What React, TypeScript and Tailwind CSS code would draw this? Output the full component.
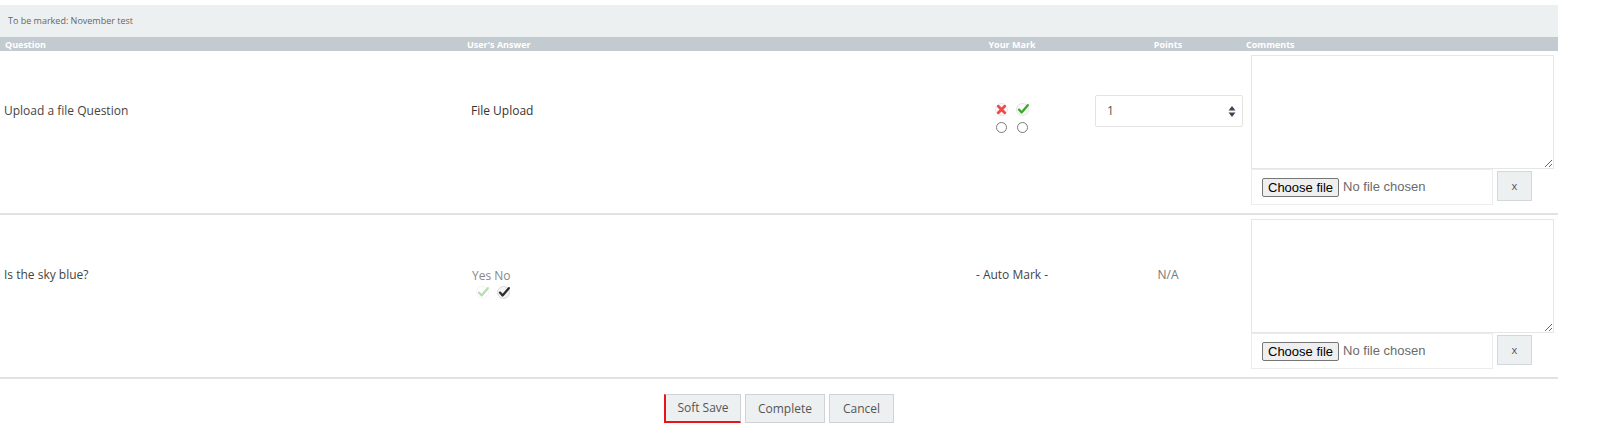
import React from 'react';

const font = { fontFamily: '"Open Sans", "Liberation Sans", Arial, sans-serif' };
const arial = { fontFamily: '"Liberation Sans", Arial, sans-serif' };

function CrossIcon() {
  return (
    <svg width="13" height="13" viewBox="0 0 13 13">
      <circle cx="6.5" cy="6.5" r="6" fill="#fafafa" stroke="#e4e4e4" />
      <path d="M3.3 3.3l6.4 6.4M9.7 3.3l-6.4 6.4" stroke="#f0484b" strokeWidth="2.8" strokeLinecap="round" />
    </svg>
  );
}

function TickIcon({ color = '#3aa82a', ring = '#e2e2e2', fill = '#fafafa' }: { color?: string; ring?: string; fill?: string }) {
  return (
    <svg width="13" height="13" viewBox="0 0 13 13">
      <circle cx="6.5" cy="6.5" r="6" fill={fill} stroke={ring} />
      <path d="M3 6.6l2.6 2.9L11.8 2.2" fill="none" stroke={color} strokeWidth="2.3" strokeLinecap="round" strokeLinejoin="round" />
    </svg>
  );
}

function Radio() {
  return <span className="inline-block w-[11px] h-[11px] rounded-full border border-[#7a7a7a] bg-white" />;
}

function Spinner() {
  return (
    <svg width="8" height="13" viewBox="0 0 8 13">
      <path d="M4 1L7.5 5.5H0.5Z" fill="#3b4552" />
      <path d="M4 12L7.5 7.5H0.5Z" fill="#3b4552" />
    </svg>
  );
}

function CommentsCell() {
  return (
    <div className="pt-[4px] pb-[8px] pl-[5px]">
      <textarea className="block w-[303px] h-[114px] border border-[#e6e6e6] bg-white outline-none resize" />
      <div className="flex items-center gap-[4px]">
        <div className="w-[242px] h-[36px] border border-[#ececec] bg-white flex items-center pl-[10px] text-[13px]" style={arial}>
          <button className="h-[19px] px-[5px] border border-[#767676] rounded-[2px] bg-[#efefef] text-black leading-none">Choose file</button>
          <span className="ml-[4px] text-[#6b6b6b]">No file chosen</span>
        </div>
        <button className="w-[35px] h-[30px] -mt-[2px] bg-[#edf0f1] border border-[#d3d7da] text-[11px] text-[#555]">x</button>
      </div>
    </div>
  );
}

export default function App() {
  const cols = 'grid grid-cols-[462px_472px_156px_156px_312px]';
  return (
    <div className="bg-white w-[1600px] h-[436px] text-[#444]" style={font}>
      <div className="w-[1558px] pt-[5px]">
        <div className="h-[32px] bg-[#edf0f1] flex items-center pl-[8px] text-[9px] text-[#666]">To be marked: November test</div>
        <div className={`${cols} h-[14px] bg-[#c3cbd0] text-white text-[9px] font-bold items-center leading-none`}>
          <div className="pl-[5px]">Question</div>
          <div className="pl-[5px]">User's Answer</div>
          <div className="text-center">Your Mark</div>
          <div className="text-center">Points</div>
          <div>Comments</div>
        </div>

        {/* row 1 */}
        <div className={`${cols} border-b-2 border-[#e2e2e2] text-[12px]`}>
          <div className="flex items-center pl-[4px] pb-[42px]">Upload a file Question</div>
          <div className="flex items-center pl-[9px] pb-[42px] text-[#333]">File Upload</div>
          <div className="flex items-center justify-center pb-[42px]">
            <div className="grid grid-cols-2 gap-x-[8px] gap-y-[6px] mt-[14px] justify-items-center">
              <CrossIcon />
              <TickIcon />
              <Radio />
              <Radio />
            </div>
          </div>
          <div className="flex items-center pl-[5px] pb-[42px]">
            <div className="w-[148px] h-[32px] border border-[#e3e3e3] rounded-[2px] bg-white flex items-center justify-between pl-[11px] pr-[6px] text-[#555]">
              <span>1</span>
              <Spinner />
            </div>
          </div>
          <CommentsCell />
        </div>

        {/* row 2 */}
        <div className={`${cols} border-b-2 border-[#e2e2e2] text-[12px]`}>
          <div className="flex items-center pl-[4px] pb-[42px]">Is the sky blue?</div>
          <div className="flex items-center pl-[10px] pb-[42px]">
            <div className="mt-[16px]">
              <div className="text-[#888]">Yes No</div>
              <div className="flex gap-[8px] pl-[4px] mt-[1px]">
                <TickIcon color="#b9dcb4" ring="#f3f3f3" fill="#ffffff" />
                <TickIcon color="#2b2b2b" ring="#d8d8d8" fill="#f4f4f4" />
              </div>
            </div>
          </div>
          <div className="flex items-center justify-center pb-[42px]">- Auto Mark -</div>
          <div className="flex items-center justify-center pb-[42px] text-[#777]">N/A</div>
          <CommentsCell />
        </div>

        <div className="flex justify-center gap-[4px] mt-[15px] text-[12px] text-[#555]">
          <button className="w-[77px] h-[29px] bg-[#edf0f1] border border-[#cfd3d6] border-l-2 border-l-[#e8141a] border-b-2 border-b-[#e8141a]">Soft Save</button>
          <button className="w-[80px] h-[29px] bg-[#edf0f1] border border-[#cfd3d6]">Complete</button>
          <button className="w-[65px] h-[29px] bg-[#edf0f1] border border-[#cfd3d6]">Cancel</button>
        </div>
      </div>
    </div>
  );
}
